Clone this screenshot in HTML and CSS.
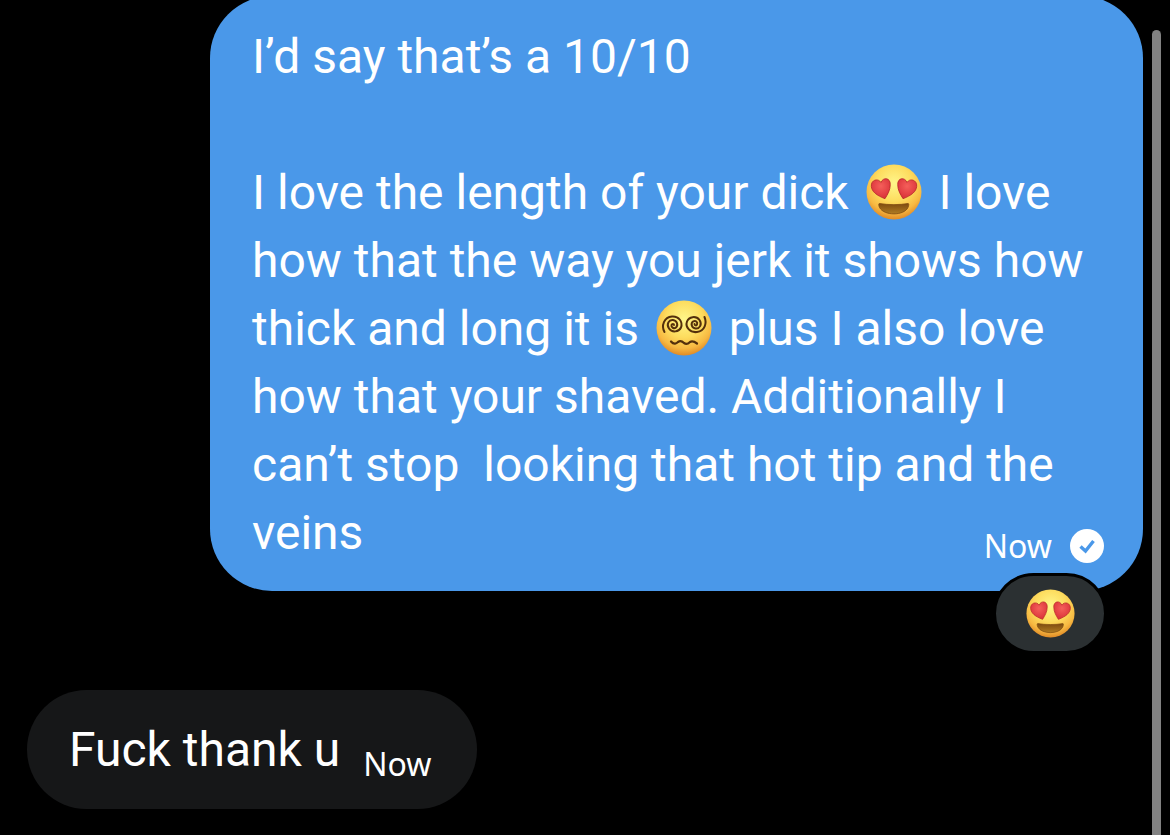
FILE: index.html
```html
<!DOCTYPE html>
<html lang="en">
<head>
    <meta charset="UTF-8">
    <meta name="viewport" content="width=device-width, initial-scale=1.0">
    <title>Messages</title>
    <link rel="stylesheet" href="styles.css">
</head>
<body>

<!-- Shared emoji drawings -->
<svg class="defs" width="0" height="0" aria-hidden="true">
    <defs>
        <radialGradient id="face" cx="50%" cy="34%" r="66%">
            <stop offset="0" stop-color="#fff68a"/>
            <stop offset="0.5" stop-color="#fddc5e"/>
            <stop offset="0.8" stop-color="#f7b942"/>
            <stop offset="1" stop-color="#e08a26"/>
        </radialGradient>
        <radialGradient id="heart" cx="50%" cy="35%" r="65%">
            <stop offset="0" stop-color="#f55f5a"/>
            <stop offset="1" stop-color="#d93038"/>
        </radialGradient>
        <linearGradient id="mouth" x1="0" y1="0" x2="0" y2="1">
            <stop offset="0" stop-color="#7d4a10"/>
            <stop offset="1" stop-color="#b07c22"/>
        </linearGradient>
        <symbol id="heart-eyes" viewBox="0 0 56 56">
            <circle cx="28" cy="28" r="27.5" fill="url(#face)"/>
            <path d="M18 35C10 31 5.5 27 5.5 21.5C5.5 15 13 13.5 15.5 18.5C18 13 25.5 14.5 24.500 21.500C24 27 21 31 18 35Z" transform="rotate(-5 15 24)" fill="url(#heart)" stroke="#b8282a" stroke-width="0.8"/>
            <path d="M38 35C46 31 50.5 27 50.5 21.5C50.5 15 43 13.5 40.5 18.5C38 13 30.5 14.5 31.5 21.5C32 27 35 31 38 35Z" transform="rotate(5 41 24)" fill="url(#heart)" stroke="#b8282a" stroke-width="0.8"/>
            <path d="M13.5 39.5C22 41 34 41 42 39.5C43 39.5 43 41 42 43.5C38 52 18 52 13.5 43.5C12.5 41 12.500 39.500 13.5 39.5Z" fill="url(#mouth)" stroke="#7d4a10" stroke-width="0.8"/>
        </symbol>
        <symbol id="dizzy" viewBox="0 0 56 56">
            <circle cx="28" cy="28" r="27.5" fill="url(#face)"/>
            <g fill="none" stroke="#54300c" stroke-width="2" stroke-linecap="round">
                <path d="M8.5 32C5 26 8 17 16 16.5C23 16 27 22 25 27.5C23 32 16 33 13 28.5C10 24 13 19.5 17 20C21 20.5 22.5 25 20 27.5C18 29 15 27.5 15.5 25C16 23.5 18 23.5 18 25"/>
                <path d="M48.5 17C51 23 49 31 41 32C34 33 29 27 31 21.5C33 16.5 40 15.5 43.5 20C46.5 24.5 43.5 29 39.5 28.5C35.5 28 34.5 23.5 37 21.5C39.5 20 42 22 41 24.5C40.5 26 38.5 25.5 38.5 24"/>
                <path d="M15 41.5C18 45 20.5 43.5 22 42C24 40.5 26 41 28 43C30 44.5 32 44 34 42C36.5 40.5 39 42 41 43.5" stroke-width="2.2"/>
            </g>
        </symbol>
    </defs>
</svg>

<main class="chat">
    <article class="message sent">
        <p class="text">I’d say that’s a 10/10<br>
            <br>
            I love the length of your dick <svg class="emoji" role="img" aria-label="Heart eyes"><use href="#heart-eyes"/></svg> I love<br>
            how that the way you jerk it shows how<br>
            thick and long it is <svg class="emoji" role="img" aria-label="Dizzy face"><use href="#dizzy"/></svg> plus I also love<br>
            how that your shaved. Additionally I<br>
            can’t stop&nbsp; looking that hot tip and the<br>
            veins</p>
        <div class="status">
            <time class="time">Now</time>
            <svg class="check" viewBox="0 0 34 34" role="img" aria-label="Sent">
                <circle cx="17" cy="17" r="17" fill="#fff"/>
                <path d="M10.5 17.5L15.5 22L23.5 12" fill="none" stroke="#4a98e9" stroke-width="3.4"/>
            </svg>
        </div>
        <button class="reaction" type="button" aria-label="Heart eyes reaction">
            <svg class="reaction-emoji" aria-hidden="true"><use href="#heart-eyes"/></svg>
        </button>
    </article>

    <article class="message received">
        <p class="text">Fuck thank u</p>
        <time class="time">Now</time>
    </article>
</main>

<div class="scrollbar"></div>

</body>
</html>
```

FILE: styles.css
```css
* {
    box-sizing: border-box;
}

body {
    margin: 0;
    background-color: #000;
    color: #fff;
    font-family: Roboto, "Liberation Sans", sans-serif;
    overflow: hidden;
}

.defs {
    position: absolute;
}

.chat {
    display: flex;
    flex-direction: column;
    gap: 99px;
    margin-top: -4px;
    padding: 0 27px;
}

.message {
    position: relative;
    border-radius: 62px;
}

.text {
    margin: 0;
    font-size: 48px;
    line-height: 68px;
    white-space: nowrap;
}

.time {
    font-family: "Noto Sans", sans-serif;
    font-size: 32px;
    line-height: 40px;
}

.emoji {
    width: 56px;
    height: 56px;
    margin: 0 5px;
    vertical-align: -11px;
}

/* Sent message */
.sent {
    align-self: flex-end;
    width: 82vw;
    max-width: 933px;
    padding: 27px 42px 24px;
    background-color: #4a98e9;
}

.status {
    position: absolute;
    right: 39px;
    bottom: 25px;
    display: flex;
    align-items: center;
    gap: 18px;
}

.check {
    width: 34px;
    height: 34px;
}

.reaction {
    position: absolute;
    right: 36px;
    bottom: -63px;
    display: flex;
    align-items: center;
    justify-content: center;
    width: 114px;
    height: 81px;
    padding: 0;
    border: 3px solid #000;
    border-radius: 41px;
    background-color: #2b3032;
    cursor: pointer;
}

.reaction-emoji {
    width: 49px;
    height: 49px;
}

/* Received message */
.received {
    align-self: flex-start;
    display: flex;
    align-items: flex-end;
    gap: 23px;
    padding: 26px 45px 25px 42px;
    background-color: #161718;
}

.scrollbar {
    position: absolute;
    top: 30px;
    right: 9px;
    bottom: 0;
    width: 9px;
    border-radius: 5px 5px 0 0;
    background-color: #828282;
}
```
